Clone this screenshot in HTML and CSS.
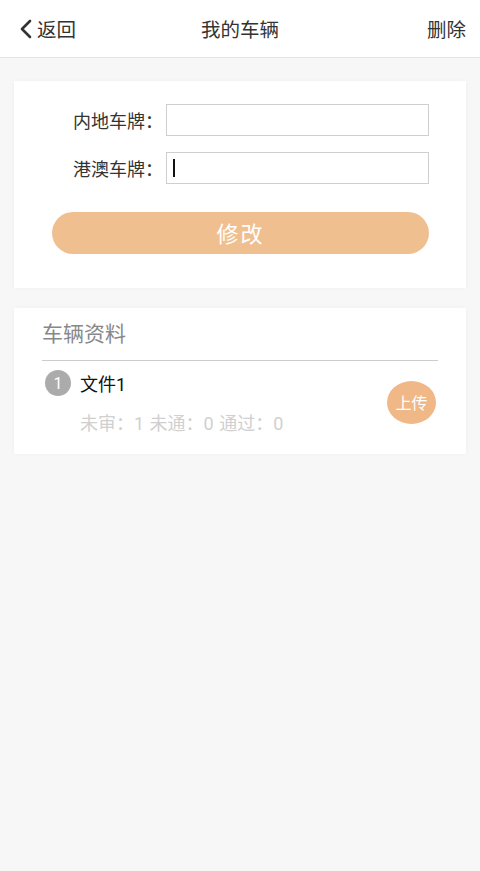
FILE: index.html
```html
<!DOCTYPE html>
<html lang="zh">
<head>
<meta charset="utf-8">
<title>我的车辆</title>
<link rel="stylesheet" href="styles.css">
</head>
<body>
<header class="topbar">
  <div class="back">
    <svg class="chev" width="14" height="20" viewBox="0 0 14 20"><path d="M11 2 L3 10 L11 18" fill="none" stroke="#333" stroke-width="2.6" stroke-linecap="round" stroke-linejoin="round"/></svg>
    <span>返回</span>
  </div>
  <div class="title">我的车辆</div>
  <div class="del">删除</div>
</header>
<main class="content">
  <section class="card form-card">
    <div class="row">
      <label class="lbl">内地车牌：</label>
      <div class="input"></div>
    </div>
    <div class="row">
      <label class="lbl">港澳车牌：</label>
      <div class="input"><span class="caret"></span></div>
    </div>
    <div class="btn-wrap"><div class="btn">修改</div></div>
  </section>
  <section class="card info-card">
    <div class="sec-title">车辆资料</div>
    <div class="item">
      <div class="item-main">
        <div class="item-head">
          <span class="num">1</span>
          <span class="name">文件1</span>
        </div>
        <div class="stats">未审：1 未通：0 通过：0</div>
      </div>
      <div class="upload">上传</div>
    </div>
  </section>
</main>
</body>
</html>
```
FILE: styles.css
```css
html, body {
  margin: 0;
  padding: 0;
}
body {
  background: #f7f7f7;
  font-family: "Noto Sans CJK SC", "Noto Sans", sans-serif;
  color: #333;
  width: 480px;
  height: 871px;
}
.topbar {
  background: #fff;
  border-bottom: 1px solid #e4e4e4;
  display: flex;
  align-items: center;
  justify-content: space-between;
  padding: 0 14px 0 19px;
  box-sizing: border-box;
  height: 58px;
  position: relative;
  font-size: 19.5px;
  color: #333;
}
.back {
  display: flex;
  align-items: center;
  gap: 4px;
}
.chev { display: block; }
.title {
  position: absolute;
  left: 0;
  right: 0;
  text-align: center;
  pointer-events: none;
}
.content {
  padding: 23px 14px 0;
  display: flex;
  flex-direction: column;
  gap: 20px;
}
.card {
  background: #fff;
  box-shadow: 0 0 4px rgba(0,0,0,0.04);
}
.form-card {
  height: 207px;
  box-sizing: border-box;
  padding: 23px 37px 0 38px;
}
.row {
  display: flex;
  align-items: center;
  height: 32px;
  margin-bottom: 16px;
}
.lbl {
  width: 114px;
  text-align: right;
  font-size: 18px;
  color: #333;
  padding-right: 3px;
  box-sizing: border-box;
}
.input {
  flex: 1;
  height: 32px;
  box-sizing: border-box;
  border: 1px solid #cfcfcf;
  display: flex;
  align-items: center;
  padding-left: 6px;
}
.caret {
  width: 1.5px;
  height: 18px;
  background: #111;
}
.btn-wrap {
  padding-top: 12px;
}
.btn {
  height: 42px;
  border-radius: 21px;
  background: #f0bf8f;
  color: #fff;
  font-size: 22px;
  line-height: 1;
  display: flex;
  align-items: center;
  justify-content: center;
  letter-spacing: 2px;
  padding-bottom: 2px;
  box-sizing: border-box;
}
.info-card {
  height: 146px;
  box-sizing: border-box;
  padding: 0 28px;
}
.sec-title {
  border-bottom: 1.5px solid #cccccc;
  font-size: 21px;
  color: #888;
  display: flex;
  align-items: center;
  padding-bottom: 5px;
  box-sizing: border-box;
  height: 53px;
}
.item {
  display: flex;
  align-items: center;
  justify-content: space-between;
}
.item-main {
  padding-left: 3px;
}
.item-head {
  display: flex;
  align-items: center;
  gap: 9px;
  margin-top: 9px;
}
.num {
  width: 26px;
  height: 26px;
  border-radius: 50%;
  background: #ababab;
  color: #fff;
  font-family: Roboto, "Noto Sans CJK SC", sans-serif;
  font-size: 16px;
  display: flex;
  align-items: center;
  justify-content: center;
}
.name {
  font-family: Roboto, "Noto Sans CJK SC", sans-serif;
  font-size: 18px;
  color: #111;
}
.stats {
  margin-top: 13px;
  padding-left: 35px;
  font-family: Roboto, "Noto Sans CJK SC", sans-serif;
  font-size: 18px;
  color: #d0d0d0;
  word-spacing: 1px;
}
.upload {
  width: 49px;
  height: 43px;
  border-radius: 50%;
  background: #efb886;
  color: #fff;
  font-size: 16px;
  display: flex;
  align-items: center;
  justify-content: center;
  margin-right: 2px;
  margin-top: 8px;
}
```
